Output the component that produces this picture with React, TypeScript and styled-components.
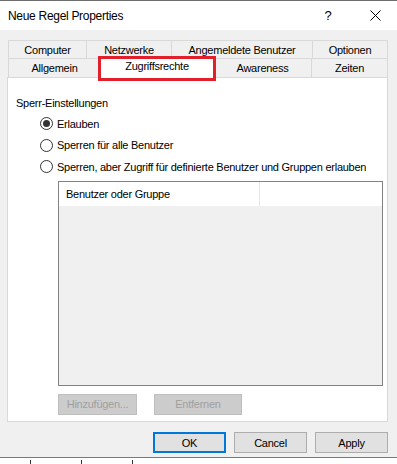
import React from 'react';
import styled, { createGlobalStyle } from 'styled-components';

const GlobalStyle = createGlobalStyle`
  html, body {
    margin: 0;
    padding: 0;
    background: #ffffff;
  }
  body {
    font-family: "Liberation Sans", Arial, sans-serif;
    font-size: 11px;
    letter-spacing: -0.25px;
    color: #000;
  }
`;

const Screen = styled.div`
  width: 397px;
  height: 464px;
  overflow: hidden;
  display: flex;
  flex-direction: column;
  background: #ffffff;
`;

const BehindStrip = styled.div`
  height: 1px;
  background: #9aa3ad;
  border-bottom: 1px solid #6d6d6d;
`;

const Window = styled.div`
  display: flex;
  flex-direction: column;
  background: #f0f0f0;
  border-bottom: 1px solid #7a7a7a;
`;

const TitleBar = styled.div`
  height: 29px;
  background: #ffffff;
  display: flex;
  align-items: center;
  padding: 0 0 0 8px;
`;

const Title = styled.div`
  flex: 1;
  font-size: 12px;
  letter-spacing: -0.3px;
`;

const TitleButton = styled.div<{ $w: number }>`
  width: ${(p) => p.$w}px;
  height: 29px;
  display: flex;
  align-items: center;
  justify-content: center;
  font-size: 13px;
`;

const Body = styled.div`
  padding: 10px 9px 0 7px;
  display: flex;
  flex-direction: column;
`;

const TabRow = styled.div<{ $h: number }>`
  display: flex;
  height: ${(p) => p.$h}px;
  padding-left: 1px;
`;

const Tab = styled.div<{ $w: number; $selected?: boolean }>`
  position: relative;
  width: ${(p) => p.$w}px;
  box-sizing: border-box;
  display: flex;
  align-items: center;
  justify-content: center;
  border: 1px solid #d9d9d9;
  border-bottom: none;
  margin-right: -1px;
  background: ${(p) => (p.$selected ? '#ffffff' : '#f0f0f0')};
  ${(p) =>
    p.$selected &&
    `
    z-index: 2;
    margin-top: -2px;
    height: calc(100% + 3px);
    padding-bottom: 4px;
  `}
`;

const Highlight = styled.div`
  position: absolute;
  left: -3px;
  top: -1px;
  right: -3px;
  bottom: -3px;
  border: 3px solid #e1202c;
  pointer-events: none;
`;

const Panel = styled.div`
  height: 345px;
  background: #ffffff;
  border: 1px solid #d9d9d9;
  box-sizing: border-box;
  padding: 17px 0 0 8px;
  display: flex;
  flex-direction: column;
`;

const GroupLabel = styled.div`
  line-height: 16px;
  margin-bottom: 2px;
`;

const RadioRow = styled.label`
  display: flex;
  align-items: center;
  height: 21.5px;
  padding-left: 24px;
  gap: 4px;
`;

const RadioCircle = styled.span<{ $checked?: boolean }>`
  width: 13px;
  height: 13px;
  box-sizing: border-box;
  border-radius: 50%;
  border: 1px solid #333333;
  background: #ffffff;
  display: flex;
  align-items: center;
  justify-content: center;
  &::after {
    content: '';
    width: 7px;
    height: 7px;
    border-radius: 50%;
    background: ${(p) => (p.$checked ? '#333333' : 'transparent')};
  }
`;

const ListBox = styled.div`
  margin: 3px 0 0 42px;
  width: 325px;
  height: 205px;
  box-sizing: border-box;
  border: 1px solid #828282;
  background: #f0f0f0;
  display: flex;
  flex-direction: column;
`;

const ListHeader = styled.div`
  height: 24px;
  background: #ffffff;
  display: flex;
`;

const HeaderCell = styled.div<{ $w?: number }>`
  ${(p) => (p.$w ? `width: ${p.$w}px;` : 'flex: 1;')}
  box-sizing: border-box;
  padding-left: 7px;
  display: flex;
  align-items: center;
  border-right: 1px solid #e5e5e5;
  &:last-child {
    border-right: none;
  }
`;

const ListButtons = styled.div`
  display: flex;
  gap: 17px;
  margin: 8px 0 0 42px;
`;

const Button = styled.button<{ $w: number; $default?: boolean }>`
  width: ${(p) => p.$w}px;
  height: 21px;
  box-sizing: border-box;
  font-family: inherit;
  font-size: 11px;
  letter-spacing: -0.25px;
  color: #000;
  background: #e1e1e1;
  border: ${(p) => (p.$default ? '2px solid #0078d7' : '1px solid #adadad')};
  padding: 0;
  &:disabled {
    background: #cccccc;
    border-color: #bfbfbf;
    color: #a0a0a0;
  }
`;

const Footer = styled.div`
  display: flex;
  justify-content: flex-end;
  gap: 8px;
  padding: 10px 0 4px 0;
`;

const BelowStrip = styled.div`
  flex: 1;
  background: #ffffff;
  display: flex;
  gap: 50px;
  padding: 2px 0 0 30px;
`;

const Mark = styled.span`
  width: 1px;
  height: 6px;
  background: #333;
`;

const CloseIcon = () => (
  <svg width="11" height="11" viewBox="0 0 11 11">
    <path d="M0.5 0.5 L10.5 10.5 M10.5 0.5 L0.5 10.5" stroke="#000" strokeWidth="1" />
  </svg>
);

const row1 = [
  { label: 'Computer', w: 79 },
  { label: 'Netzwerke', w: 86 },
  { label: 'Angemeldete Benutzer', w: 142 },
  { label: 'Optionen', w: 76 },
];

const row2 = [
  { label: 'Allgemein', w: 93 },
  { label: 'Zugriffsrechte', w: 114, selected: true },
  { label: 'Awareness', w: 99 },
  { label: 'Zeiten', w: 77 },
];

const radios = [
  { label: 'Erlauben', checked: true },
  { label: 'Sperren für alle Benutzer' },
  { label: 'Sperren, aber Zugriff für definierte Benutzer und Gruppen erlauben' },
];

export default function App() {
  return (
    <Screen>
      <GlobalStyle />
      <BehindStrip />
      <Window>
        <TitleBar>
          <Title>Neue Regel Properties</Title>
          <TitleButton $w={50}>?</TitleButton>
          <TitleButton $w={44}>
            <CloseIcon />
          </TitleButton>
        </TitleBar>
        <Body>
          <TabRow $h={18}>
            {row1.map((t) => (
              <Tab key={t.label} $w={t.w}>
                {t.label}
              </Tab>
            ))}
          </TabRow>
          <TabRow $h={19}>
            {row2.map((t) => (
              <Tab key={t.label} $w={t.w} $selected={t.selected}>
                {t.label}
                {t.selected && <Highlight />}
              </Tab>
            ))}
          </TabRow>
          <Panel>
            <GroupLabel>Sperr-Einstellungen</GroupLabel>
            {radios.map((r) => (
              <RadioRow key={r.label}>
                <RadioCircle $checked={r.checked} />
                {r.label}
              </RadioRow>
            ))}
            <ListBox>
              <ListHeader>
                <HeaderCell $w={201}>Benutzer oder Gruppe</HeaderCell>
                <HeaderCell />
              </ListHeader>
            </ListBox>
            <ListButtons>
              <Button $w={79} disabled>
                Hinzufügen...
              </Button>
              <Button $w={88} disabled>
                Entfernen
              </Button>
            </ListButtons>
          </Panel>
          <Footer>
            <Button $w={73} $default>
              OK
            </Button>
            <Button $w={73}>Cancel</Button>
            <Button $w={73}>Apply</Button>
          </Footer>
        </Body>
      </Window>
      <BelowStrip>
        <Mark />
        <Mark />
        <Mark />
      </BelowStrip>
    </Screen>
  );
}
